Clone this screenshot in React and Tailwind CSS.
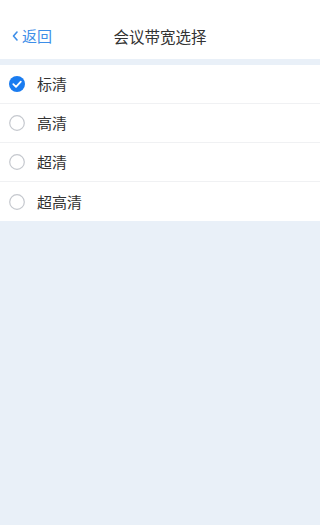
import React, { useState } from "react";

const options = ["标清", "高清", "超清", "超高清"];

function Check({ on }) {
  if (on) {
    return (
      <svg width="16" height="16" viewBox="0 0 16 16">
        <circle cx="8" cy="8" r="8" fill="#1a7cf0" />
        <path d="M4.3 8.2 L7 10.8 L11.8 5.6" fill="none" stroke="#fff" strokeWidth="1.8" strokeLinecap="round" strokeLinejoin="round" />
      </svg>
    );
  }
  return (
    <svg width="16" height="16" viewBox="0 0 16 16">
      <circle cx="8" cy="8" r="7.3" fill="none" stroke="#c5c8ce" strokeWidth="1.2" />
    </svg>
  );
}

export default function App() {
  const [sel, setSel] = useState(0);
  return (
    <div
      className="w-[320px] h-[525px] bg-[#e9f0f8] flex flex-col"
      style={{ fontFamily: '"Noto Sans CJK SC", "Noto Sans", sans-serif' }}
    >
      <div className="h-[59px] bg-white flex items-end pb-[12px] relative">
        <div className="flex items-center pl-[11px] text-[#3d8ee8] text-[15px] leading-[22px]">
          <svg width="8" height="12" viewBox="0 0 8 12" className="mr-[3px]">
            <path d="M6 2 L2.5 6 L6 10" fill="none" stroke="#3d8ee8" strokeWidth="1.6" strokeLinecap="round" strokeLinejoin="round" />
          </svg>
          <span>返回</span>
        </div>
        <div className="absolute left-0 right-0 bottom-[12px] text-center text-[15.5px] leading-[22px] text-[#333]">
          会议带宽选择
        </div>
      </div>
      <div className="h-[6px]" />
      <div className="bg-white flex flex-col">
        {options.map((o, i) => (
          <div
            key={o}
            onClick={() => setSel(i)}
            className={`h-[39px] flex items-center pl-[9px] gap-[12px] ${i < options.length - 1 ? "border-b border-[#f0f1f3]" : ""}`}
          >
            <Check on={sel === i} />
            <span className="text-[15px] text-[#333] leading-[22px]">{o}</span>
          </div>
        ))}
      </div>
    </div>
  );
}
